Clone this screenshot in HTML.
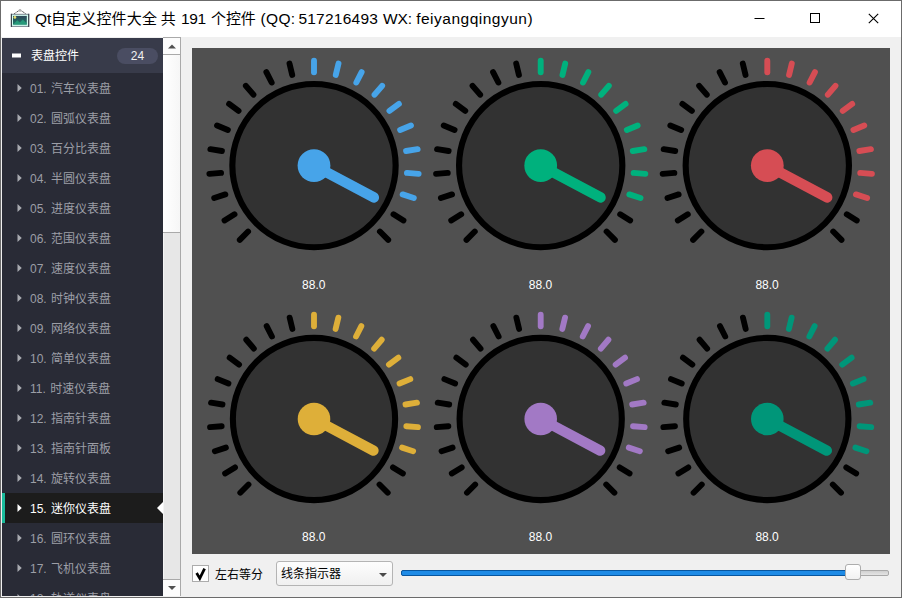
<!DOCTYPE html>
<html lang="zh"><head><meta charset="utf-8"><title>Qt自定义控件大全</title>
<style>
*{box-sizing:border-box;margin:0;padding:0}
html,body{width:902px;height:598px;overflow:hidden;background:#f0f0f0}
body{position:relative;font-family:"Liberation Sans","Noto Sans CJK SC",sans-serif;font-size:12px;color:#000}
#win{position:absolute;left:0;top:0;width:902px;height:598px;border:1px solid #6b6b6b;overflow:hidden}
.abs{position:absolute}
#title{left:0;top:0;width:900px;height:36px;background:#fff}
#ttext{left:0;top:8px;height:20px;line-height:20px;white-space:nowrap;color:#000}
#ttext span{position:absolute;top:0;line-height:20px}
#side{left:1px;top:37px;width:161px;height:558px;background:#292b36;overflow:hidden}
#hdr{left:0;top:0;width:161px;height:35px;background:#383b4a;color:#fff}
#hdr .minus{position:absolute;left:10px;top:16px;width:9px;height:4px;background:#fff;transform:translateY(-0.5px)}
#hdr .t{position:absolute;left:29px;top:1px;line-height:35px;font-size:12px}
#hdr .badge{position:absolute;left:115px;top:10px;width:41px;height:16px;border-radius:8px;background:#4a4d62;color:#f0f0f0;text-align:center;line-height:17px;font-size:12px}
.it{position:absolute;left:0;width:161px;height:30px;line-height:30px;color:#9c9ea6;font-size:12px;top:0}
.it span{position:absolute;left:28px;top:1px;white-space:nowrap;word-spacing:1px}
.it .tri{position:absolute;left:15px;top:11px;width:5px;height:8px;background:#a8aab0;clip-path:polygon(10% 0,95% 50%,10% 100%)}
.it.sel{background:#1c1c1c;color:#fff;border-left:3px solid #1abc9c}
.it.sel span{left:25px}
.it.sel .tri{left:12px;background:#fff}
.it.sel:after{content:"";position:absolute;right:0;top:9px;width:0;height:0;border-right:6px solid #fff;border-top:6px solid transparent;border-bottom:6px solid transparent}
#sb{left:162px;top:37px;width:18px;height:558px;background:#e7e7e7;border-right:1px solid #a9a9a9;border-left:1px solid #f4f4f4}
#sb .up{position:absolute;left:-1px;top:-1px;width:18px;height:18px;background:#fcfcfc;border:1px solid #a9a9a9;border-left:none}
#sb .handle{position:absolute;left:-1px;top:17px;width:18px;height:178px;background:linear-gradient(90deg,#fff,#f6f6f6);border:1px solid #a9a9a9;border-top:none;border-left:none}
#sb .down{position:absolute;left:-1px;top:541px;width:18px;height:17px;background:#fcfcfc;border:1px solid #a9a9a9;border-left:none;border-bottom:none}
#panel{left:191px;top:47px;width:698px;height:506px;background:#505050}
.val{font-family:"Liberation Sans",sans-serif;font-size:12px;fill:#fff}
#chk{left:191px;top:564px;width:17px;height:17px;background:#fff;border:1px solid #acacac}
#chkl{left:214px;top:565px;line-height:18px;font-size:12px}
#combo{left:275px;top:560px;width:117px;height:25px;border:1px solid #b4b4b4;border-radius:3px;background:linear-gradient(#fdfdfd,#f0f0f0)}
#combo span{position:absolute;left:4px;top:1px;line-height:23px;font-size:12px}
#combo i{position:absolute;left:102px;top:11px;width:0;height:0;border-top:4px solid #4a4a4a;border-left:4px solid transparent;border-right:4px solid transparent}
#groove{left:400px;top:569px;width:488px;height:6px;border:1px solid #a8a8a8;border-radius:2px;background:linear-gradient(#d0d0d0,#e4e4e4)}
#fill{left:400px;top:569px;width:452px;height:6px;border:1px solid #08569f;border-radius:2px;background:#1e8be6}
#knob{left:844px;top:563px;width:16px;height:16px;border:1px solid #adadad;border-radius:3px;background:linear-gradient(#fff,#f2f2f2)}
</style></head><body>
<div id="win">
<div id="title" class="abs">
<svg class="abs" style="left:9px;top:7px" width="22" height="22" viewBox="0 0 22 22">
<defs><linearGradient id="pg" x1="0" y1="0" x2="0" y2="1"><stop offset="0" stop-color="#2f4658"/><stop offset="0.5" stop-color="#245e60"/><stop offset="1" stop-color="#1f7a68"/></linearGradient></defs>
<path d="M3.9 6 L9.2 2.4 L10.8 2.4 L16.1 6" fill="none" stroke="#3a3a3a" stroke-width="0.9" stroke-dasharray="1.3 0.5"/>
<circle cx="10" cy="2.4" r="1.4" fill="#b4b4b4"/>
<rect x="1.4" y="6.3" width="17.3" height="12.1" fill="#d4fff2" stroke="#7c8892" stroke-width="1"/>
<path d="M1.4 5.8 V18.9 M18.7 5.8 V18.9" stroke="#38424a" stroke-width="1.1" fill="none"/>
<rect x="3" y="7.9" width="13.8" height="8.7" fill="url(#pg)"/>
<path d="M3.2 16.6 L7.2 12.2 L9.8 14.6 L12.8 11.6 L16.8 15.4 L16.8 16.6 Z" fill="#27a07c" opacity="0.9"/>
<circle cx="4.9" cy="9.4" r="1.4" fill="#e6de6e"/>
</svg>
<div id="ttext" class="abs"><span style="left:33.9px;font-size:15.5px;letter-spacing:-0.05px">Qt</span><span style="left:50.0px;font-size:15px;letter-spacing:0.15px">自定义控件大全</span> <span style="left:159.8px;font-size:15px;letter-spacing:0.0px">共</span> <span style="left:180.1px;font-size:15.5px;letter-spacing:-0.44px">191</span> <span style="left:210.1px;font-size:15px;letter-spacing:-0.16px">个控件</span> <span style="left:259.6px;font-size:15.5px;letter-spacing:0.3px">(QQ:</span> <span style="left:297.4px;font-size:15.5px;letter-spacing:0.24px">517216493</span> <span style="left:382.1px;font-size:15.5px;letter-spacing:-0.14px">WX:</span> <span style="left:415.2px;font-size:15.5px;letter-spacing:0.5px">feiyangqingyun)</span> </div>
<svg class="abs" style="left:740px;top:0" width="160" height="36" viewBox="0 0 160 36">
<path d="M13.5 17.5 H23.5" stroke="#000" stroke-width="1" fill="none"/>
<rect x="69.5" y="12.5" width="9" height="9" stroke="#000" stroke-width="1" fill="none"/>
<path d="M127.8 12.8 L137.2 22.2 M137.2 12.8 L127.8 22.2" stroke="#000" stroke-width="1.1" fill="none"/>
</svg>
</div>
<div id="side" class="abs">
<div id="hdr" class="abs"><i class="minus"></i><span class="t">表盘控件</span><span class="badge">24</span></div>
<div class="it" style="top:35px"><i class="tri"></i><span>01. 汽车仪表盘</span></div>
<div class="it" style="top:65px"><i class="tri"></i><span>02. 圆弧仪表盘</span></div>
<div class="it" style="top:95px"><i class="tri"></i><span>03. 百分比表盘</span></div>
<div class="it" style="top:125px"><i class="tri"></i><span>04. 半圆仪表盘</span></div>
<div class="it" style="top:155px"><i class="tri"></i><span>05. 进度仪表盘</span></div>
<div class="it" style="top:185px"><i class="tri"></i><span>06. 范围仪表盘</span></div>
<div class="it" style="top:215px"><i class="tri"></i><span>07. 速度仪表盘</span></div>
<div class="it" style="top:245px"><i class="tri"></i><span>08. 时钟仪表盘</span></div>
<div class="it" style="top:275px"><i class="tri"></i><span>09. 网络仪表盘</span></div>
<div class="it" style="top:305px"><i class="tri"></i><span>10. 简单仪表盘</span></div>
<div class="it" style="top:335px"><i class="tri"></i><span>11. 时速仪表盘</span></div>
<div class="it" style="top:365px"><i class="tri"></i><span>12. 指南针表盘</span></div>
<div class="it" style="top:395px"><i class="tri"></i><span>13. 指南针面板</span></div>
<div class="it" style="top:425px"><i class="tri"></i><span>14. 旋转仪表盘</span></div>
<div class="it sel" style="top:455px"><i class="tri"></i><span>15. 迷你仪表盘</span></div>
<div class="it" style="top:485px"><i class="tri"></i><span>16. 圆环仪表盘</span></div>
<div class="it" style="top:515px"><i class="tri"></i><span>17. 飞机仪表盘</span></div>
<div class="it" style="top:545px"><i class="tri"></i><span>18. 轨道仪表盘</span></div>
</div>
<div id="sb" class="abs"><div class="up"><svg width="16" height="15" viewBox="0 0 16 15" style="position:absolute;left:0;top:0"><path d="M5 10.5 L9 6.5 L13 10.5 Z" fill="#505050"/></svg></div><div class="handle"></div><div class="down"><svg width="16" height="16" viewBox="0 0 16 16" style="position:absolute;left:0;top:0"><path d="M5 6 L9 10 L13 6 Z" fill="#505050"/></svg></div></div>
<div id="panel" class="abs"></div>
<svg class="abs" style="left:-1px;top:-1px" width="902" height="598" viewBox="0 0 902 598">
<g transform="translate(314.0 165.6) scale(1.093)">
<line x1="0" y1="85.3" x2="0" y2="96" stroke="#000" stroke-width="5.4" stroke-linecap="round" transform="rotate(45.00)"/>
<line x1="0" y1="85.3" x2="0" y2="96" stroke="#000" stroke-width="5.4" stroke-linecap="round" transform="rotate(58.50)"/>
<line x1="0" y1="85.3" x2="0" y2="96" stroke="#000" stroke-width="5.4" stroke-linecap="round" transform="rotate(72.00)"/>
<line x1="0" y1="85.3" x2="0" y2="96" stroke="#000" stroke-width="5.4" stroke-linecap="round" transform="rotate(85.50)"/>
<line x1="0" y1="85.3" x2="0" y2="96" stroke="#000" stroke-width="5.4" stroke-linecap="round" transform="rotate(99.00)"/>
<line x1="0" y1="85.3" x2="0" y2="96" stroke="#000" stroke-width="5.4" stroke-linecap="round" transform="rotate(112.50)"/>
<line x1="0" y1="85.3" x2="0" y2="96" stroke="#000" stroke-width="5.4" stroke-linecap="round" transform="rotate(126.00)"/>
<line x1="0" y1="85.3" x2="0" y2="96" stroke="#000" stroke-width="5.4" stroke-linecap="round" transform="rotate(139.50)"/>
<line x1="0" y1="85.3" x2="0" y2="96" stroke="#000" stroke-width="5.4" stroke-linecap="round" transform="rotate(153.00)"/>
<line x1="0" y1="85.3" x2="0" y2="96" stroke="#000" stroke-width="5.4" stroke-linecap="round" transform="rotate(166.50)"/>
<line x1="0" y1="85.3" x2="0" y2="96" stroke="#47A4E9" stroke-width="5.4" stroke-linecap="round" transform="rotate(180.00)"/>
<line x1="0" y1="85.3" x2="0" y2="96" stroke="#47A4E9" stroke-width="5.4" stroke-linecap="round" transform="rotate(193.50)"/>
<line x1="0" y1="85.3" x2="0" y2="96" stroke="#47A4E9" stroke-width="5.4" stroke-linecap="round" transform="rotate(207.00)"/>
<line x1="0" y1="85.3" x2="0" y2="96" stroke="#47A4E9" stroke-width="5.4" stroke-linecap="round" transform="rotate(220.50)"/>
<line x1="0" y1="85.3" x2="0" y2="96" stroke="#47A4E9" stroke-width="5.4" stroke-linecap="round" transform="rotate(234.00)"/>
<line x1="0" y1="85.3" x2="0" y2="96" stroke="#47A4E9" stroke-width="5.4" stroke-linecap="round" transform="rotate(247.50)"/>
<line x1="0" y1="85.3" x2="0" y2="96" stroke="#47A4E9" stroke-width="5.4" stroke-linecap="round" transform="rotate(261.00)"/>
<line x1="0" y1="85.3" x2="0" y2="96" stroke="#47A4E9" stroke-width="5.4" stroke-linecap="round" transform="rotate(274.50)"/>
<line x1="0" y1="85.3" x2="0" y2="96" stroke="#47A4E9" stroke-width="5.4" stroke-linecap="round" transform="rotate(288.00)"/>
<line x1="0" y1="85.3" x2="0" y2="96" stroke="#000" stroke-width="5.4" stroke-linecap="round" transform="rotate(301.50)"/>
<line x1="0" y1="85.3" x2="0" y2="96" stroke="#000" stroke-width="5.4" stroke-linecap="round" transform="rotate(315.00)"/>
<circle r="74.7" fill="#323232" stroke="#000" stroke-width="5.6"/>
<line x1="0" y1="0" x2="0" y2="62" stroke="#47A4E9" stroke-width="9.6" stroke-linecap="round" transform="rotate(298.00)"/>
<circle r="15" fill="#47A4E9"/>
</g>
<text x="313.8" y="288.5" text-anchor="middle" class="val">88.0</text>
<g transform="translate(540.7 165.6) scale(1.093)">
<line x1="0" y1="85.3" x2="0" y2="96" stroke="#000" stroke-width="5.4" stroke-linecap="round" transform="rotate(45.00)"/>
<line x1="0" y1="85.3" x2="0" y2="96" stroke="#000" stroke-width="5.4" stroke-linecap="round" transform="rotate(58.50)"/>
<line x1="0" y1="85.3" x2="0" y2="96" stroke="#000" stroke-width="5.4" stroke-linecap="round" transform="rotate(72.00)"/>
<line x1="0" y1="85.3" x2="0" y2="96" stroke="#000" stroke-width="5.4" stroke-linecap="round" transform="rotate(85.50)"/>
<line x1="0" y1="85.3" x2="0" y2="96" stroke="#000" stroke-width="5.4" stroke-linecap="round" transform="rotate(99.00)"/>
<line x1="0" y1="85.3" x2="0" y2="96" stroke="#000" stroke-width="5.4" stroke-linecap="round" transform="rotate(112.50)"/>
<line x1="0" y1="85.3" x2="0" y2="96" stroke="#000" stroke-width="5.4" stroke-linecap="round" transform="rotate(126.00)"/>
<line x1="0" y1="85.3" x2="0" y2="96" stroke="#000" stroke-width="5.4" stroke-linecap="round" transform="rotate(139.50)"/>
<line x1="0" y1="85.3" x2="0" y2="96" stroke="#000" stroke-width="5.4" stroke-linecap="round" transform="rotate(153.00)"/>
<line x1="0" y1="85.3" x2="0" y2="96" stroke="#000" stroke-width="5.4" stroke-linecap="round" transform="rotate(166.50)"/>
<line x1="0" y1="85.3" x2="0" y2="96" stroke="#00B17D" stroke-width="5.4" stroke-linecap="round" transform="rotate(180.00)"/>
<line x1="0" y1="85.3" x2="0" y2="96" stroke="#00B17D" stroke-width="5.4" stroke-linecap="round" transform="rotate(193.50)"/>
<line x1="0" y1="85.3" x2="0" y2="96" stroke="#00B17D" stroke-width="5.4" stroke-linecap="round" transform="rotate(207.00)"/>
<line x1="0" y1="85.3" x2="0" y2="96" stroke="#00B17D" stroke-width="5.4" stroke-linecap="round" transform="rotate(220.50)"/>
<line x1="0" y1="85.3" x2="0" y2="96" stroke="#00B17D" stroke-width="5.4" stroke-linecap="round" transform="rotate(234.00)"/>
<line x1="0" y1="85.3" x2="0" y2="96" stroke="#00B17D" stroke-width="5.4" stroke-linecap="round" transform="rotate(247.50)"/>
<line x1="0" y1="85.3" x2="0" y2="96" stroke="#00B17D" stroke-width="5.4" stroke-linecap="round" transform="rotate(261.00)"/>
<line x1="0" y1="85.3" x2="0" y2="96" stroke="#00B17D" stroke-width="5.4" stroke-linecap="round" transform="rotate(274.50)"/>
<line x1="0" y1="85.3" x2="0" y2="96" stroke="#00B17D" stroke-width="5.4" stroke-linecap="round" transform="rotate(288.00)"/>
<line x1="0" y1="85.3" x2="0" y2="96" stroke="#000" stroke-width="5.4" stroke-linecap="round" transform="rotate(301.50)"/>
<line x1="0" y1="85.3" x2="0" y2="96" stroke="#000" stroke-width="5.4" stroke-linecap="round" transform="rotate(315.00)"/>
<circle r="74.7" fill="#323232" stroke="#000" stroke-width="5.6"/>
<line x1="0" y1="0" x2="0" y2="62" stroke="#00B17D" stroke-width="9.6" stroke-linecap="round" transform="rotate(298.00)"/>
<circle r="15" fill="#00B17D"/>
</g>
<text x="540.5" y="288.5" text-anchor="middle" class="val">88.0</text>
<g transform="translate(767.3 165.6) scale(1.093)">
<line x1="0" y1="85.3" x2="0" y2="96" stroke="#000" stroke-width="5.4" stroke-linecap="round" transform="rotate(45.00)"/>
<line x1="0" y1="85.3" x2="0" y2="96" stroke="#000" stroke-width="5.4" stroke-linecap="round" transform="rotate(58.50)"/>
<line x1="0" y1="85.3" x2="0" y2="96" stroke="#000" stroke-width="5.4" stroke-linecap="round" transform="rotate(72.00)"/>
<line x1="0" y1="85.3" x2="0" y2="96" stroke="#000" stroke-width="5.4" stroke-linecap="round" transform="rotate(85.50)"/>
<line x1="0" y1="85.3" x2="0" y2="96" stroke="#000" stroke-width="5.4" stroke-linecap="round" transform="rotate(99.00)"/>
<line x1="0" y1="85.3" x2="0" y2="96" stroke="#000" stroke-width="5.4" stroke-linecap="round" transform="rotate(112.50)"/>
<line x1="0" y1="85.3" x2="0" y2="96" stroke="#000" stroke-width="5.4" stroke-linecap="round" transform="rotate(126.00)"/>
<line x1="0" y1="85.3" x2="0" y2="96" stroke="#000" stroke-width="5.4" stroke-linecap="round" transform="rotate(139.50)"/>
<line x1="0" y1="85.3" x2="0" y2="96" stroke="#000" stroke-width="5.4" stroke-linecap="round" transform="rotate(153.00)"/>
<line x1="0" y1="85.3" x2="0" y2="96" stroke="#000" stroke-width="5.4" stroke-linecap="round" transform="rotate(166.50)"/>
<line x1="0" y1="85.3" x2="0" y2="96" stroke="#D64D54" stroke-width="5.4" stroke-linecap="round" transform="rotate(180.00)"/>
<line x1="0" y1="85.3" x2="0" y2="96" stroke="#D64D54" stroke-width="5.4" stroke-linecap="round" transform="rotate(193.50)"/>
<line x1="0" y1="85.3" x2="0" y2="96" stroke="#D64D54" stroke-width="5.4" stroke-linecap="round" transform="rotate(207.00)"/>
<line x1="0" y1="85.3" x2="0" y2="96" stroke="#D64D54" stroke-width="5.4" stroke-linecap="round" transform="rotate(220.50)"/>
<line x1="0" y1="85.3" x2="0" y2="96" stroke="#D64D54" stroke-width="5.4" stroke-linecap="round" transform="rotate(234.00)"/>
<line x1="0" y1="85.3" x2="0" y2="96" stroke="#D64D54" stroke-width="5.4" stroke-linecap="round" transform="rotate(247.50)"/>
<line x1="0" y1="85.3" x2="0" y2="96" stroke="#D64D54" stroke-width="5.4" stroke-linecap="round" transform="rotate(261.00)"/>
<line x1="0" y1="85.3" x2="0" y2="96" stroke="#D64D54" stroke-width="5.4" stroke-linecap="round" transform="rotate(274.50)"/>
<line x1="0" y1="85.3" x2="0" y2="96" stroke="#D64D54" stroke-width="5.4" stroke-linecap="round" transform="rotate(288.00)"/>
<line x1="0" y1="85.3" x2="0" y2="96" stroke="#000" stroke-width="5.4" stroke-linecap="round" transform="rotate(301.50)"/>
<line x1="0" y1="85.3" x2="0" y2="96" stroke="#000" stroke-width="5.4" stroke-linecap="round" transform="rotate(315.00)"/>
<circle r="74.7" fill="#323232" stroke="#000" stroke-width="5.6"/>
<line x1="0" y1="0" x2="0" y2="62" stroke="#D64D54" stroke-width="9.6" stroke-linecap="round" transform="rotate(298.00)"/>
<circle r="15" fill="#D64D54"/>
</g>
<text x="767.1" y="288.5" text-anchor="middle" class="val">88.0</text>
<g transform="translate(314.0 419.0) scale(1.086)">
<line x1="0" y1="85.3" x2="0" y2="96" stroke="#000" stroke-width="5.4" stroke-linecap="round" transform="rotate(45.00)"/>
<line x1="0" y1="85.3" x2="0" y2="96" stroke="#000" stroke-width="5.4" stroke-linecap="round" transform="rotate(58.50)"/>
<line x1="0" y1="85.3" x2="0" y2="96" stroke="#000" stroke-width="5.4" stroke-linecap="round" transform="rotate(72.00)"/>
<line x1="0" y1="85.3" x2="0" y2="96" stroke="#000" stroke-width="5.4" stroke-linecap="round" transform="rotate(85.50)"/>
<line x1="0" y1="85.3" x2="0" y2="96" stroke="#000" stroke-width="5.4" stroke-linecap="round" transform="rotate(99.00)"/>
<line x1="0" y1="85.3" x2="0" y2="96" stroke="#000" stroke-width="5.4" stroke-linecap="round" transform="rotate(112.50)"/>
<line x1="0" y1="85.3" x2="0" y2="96" stroke="#000" stroke-width="5.4" stroke-linecap="round" transform="rotate(126.00)"/>
<line x1="0" y1="85.3" x2="0" y2="96" stroke="#000" stroke-width="5.4" stroke-linecap="round" transform="rotate(139.50)"/>
<line x1="0" y1="85.3" x2="0" y2="96" stroke="#000" stroke-width="5.4" stroke-linecap="round" transform="rotate(153.00)"/>
<line x1="0" y1="85.3" x2="0" y2="96" stroke="#000" stroke-width="5.4" stroke-linecap="round" transform="rotate(166.50)"/>
<line x1="0" y1="85.3" x2="0" y2="96" stroke="#DEAF39" stroke-width="5.4" stroke-linecap="round" transform="rotate(180.00)"/>
<line x1="0" y1="85.3" x2="0" y2="96" stroke="#DEAF39" stroke-width="5.4" stroke-linecap="round" transform="rotate(193.50)"/>
<line x1="0" y1="85.3" x2="0" y2="96" stroke="#DEAF39" stroke-width="5.4" stroke-linecap="round" transform="rotate(207.00)"/>
<line x1="0" y1="85.3" x2="0" y2="96" stroke="#DEAF39" stroke-width="5.4" stroke-linecap="round" transform="rotate(220.50)"/>
<line x1="0" y1="85.3" x2="0" y2="96" stroke="#DEAF39" stroke-width="5.4" stroke-linecap="round" transform="rotate(234.00)"/>
<line x1="0" y1="85.3" x2="0" y2="96" stroke="#DEAF39" stroke-width="5.4" stroke-linecap="round" transform="rotate(247.50)"/>
<line x1="0" y1="85.3" x2="0" y2="96" stroke="#DEAF39" stroke-width="5.4" stroke-linecap="round" transform="rotate(261.00)"/>
<line x1="0" y1="85.3" x2="0" y2="96" stroke="#DEAF39" stroke-width="5.4" stroke-linecap="round" transform="rotate(274.50)"/>
<line x1="0" y1="85.3" x2="0" y2="96" stroke="#DEAF39" stroke-width="5.4" stroke-linecap="round" transform="rotate(288.00)"/>
<line x1="0" y1="85.3" x2="0" y2="96" stroke="#000" stroke-width="5.4" stroke-linecap="round" transform="rotate(301.50)"/>
<line x1="0" y1="85.3" x2="0" y2="96" stroke="#000" stroke-width="5.4" stroke-linecap="round" transform="rotate(315.00)"/>
<circle r="74.7" fill="#323232" stroke="#000" stroke-width="5.6"/>
<line x1="0" y1="0" x2="0" y2="62" stroke="#DEAF39" stroke-width="9.6" stroke-linecap="round" transform="rotate(298.00)"/>
<circle r="15" fill="#DEAF39"/>
</g>
<text x="313.8" y="540.5" text-anchor="middle" class="val">88.0</text>
<g transform="translate(540.7 419.0) scale(1.086)">
<line x1="0" y1="85.3" x2="0" y2="96" stroke="#000" stroke-width="5.4" stroke-linecap="round" transform="rotate(45.00)"/>
<line x1="0" y1="85.3" x2="0" y2="96" stroke="#000" stroke-width="5.4" stroke-linecap="round" transform="rotate(58.50)"/>
<line x1="0" y1="85.3" x2="0" y2="96" stroke="#000" stroke-width="5.4" stroke-linecap="round" transform="rotate(72.00)"/>
<line x1="0" y1="85.3" x2="0" y2="96" stroke="#000" stroke-width="5.4" stroke-linecap="round" transform="rotate(85.50)"/>
<line x1="0" y1="85.3" x2="0" y2="96" stroke="#000" stroke-width="5.4" stroke-linecap="round" transform="rotate(99.00)"/>
<line x1="0" y1="85.3" x2="0" y2="96" stroke="#000" stroke-width="5.4" stroke-linecap="round" transform="rotate(112.50)"/>
<line x1="0" y1="85.3" x2="0" y2="96" stroke="#000" stroke-width="5.4" stroke-linecap="round" transform="rotate(126.00)"/>
<line x1="0" y1="85.3" x2="0" y2="96" stroke="#000" stroke-width="5.4" stroke-linecap="round" transform="rotate(139.50)"/>
<line x1="0" y1="85.3" x2="0" y2="96" stroke="#000" stroke-width="5.4" stroke-linecap="round" transform="rotate(153.00)"/>
<line x1="0" y1="85.3" x2="0" y2="96" stroke="#000" stroke-width="5.4" stroke-linecap="round" transform="rotate(166.50)"/>
<line x1="0" y1="85.3" x2="0" y2="96" stroke="#A279C5" stroke-width="5.4" stroke-linecap="round" transform="rotate(180.00)"/>
<line x1="0" y1="85.3" x2="0" y2="96" stroke="#A279C5" stroke-width="5.4" stroke-linecap="round" transform="rotate(193.50)"/>
<line x1="0" y1="85.3" x2="0" y2="96" stroke="#A279C5" stroke-width="5.4" stroke-linecap="round" transform="rotate(207.00)"/>
<line x1="0" y1="85.3" x2="0" y2="96" stroke="#A279C5" stroke-width="5.4" stroke-linecap="round" transform="rotate(220.50)"/>
<line x1="0" y1="85.3" x2="0" y2="96" stroke="#A279C5" stroke-width="5.4" stroke-linecap="round" transform="rotate(234.00)"/>
<line x1="0" y1="85.3" x2="0" y2="96" stroke="#A279C5" stroke-width="5.4" stroke-linecap="round" transform="rotate(247.50)"/>
<line x1="0" y1="85.3" x2="0" y2="96" stroke="#A279C5" stroke-width="5.4" stroke-linecap="round" transform="rotate(261.00)"/>
<line x1="0" y1="85.3" x2="0" y2="96" stroke="#A279C5" stroke-width="5.4" stroke-linecap="round" transform="rotate(274.50)"/>
<line x1="0" y1="85.3" x2="0" y2="96" stroke="#A279C5" stroke-width="5.4" stroke-linecap="round" transform="rotate(288.00)"/>
<line x1="0" y1="85.3" x2="0" y2="96" stroke="#000" stroke-width="5.4" stroke-linecap="round" transform="rotate(301.50)"/>
<line x1="0" y1="85.3" x2="0" y2="96" stroke="#000" stroke-width="5.4" stroke-linecap="round" transform="rotate(315.00)"/>
<circle r="74.7" fill="#323232" stroke="#000" stroke-width="5.6"/>
<line x1="0" y1="0" x2="0" y2="62" stroke="#A279C5" stroke-width="9.6" stroke-linecap="round" transform="rotate(298.00)"/>
<circle r="15" fill="#A279C5"/>
</g>
<text x="540.5" y="540.5" text-anchor="middle" class="val">88.0</text>
<g transform="translate(767.3 419.0) scale(1.086)">
<line x1="0" y1="85.3" x2="0" y2="96" stroke="#000" stroke-width="5.4" stroke-linecap="round" transform="rotate(45.00)"/>
<line x1="0" y1="85.3" x2="0" y2="96" stroke="#000" stroke-width="5.4" stroke-linecap="round" transform="rotate(58.50)"/>
<line x1="0" y1="85.3" x2="0" y2="96" stroke="#000" stroke-width="5.4" stroke-linecap="round" transform="rotate(72.00)"/>
<line x1="0" y1="85.3" x2="0" y2="96" stroke="#000" stroke-width="5.4" stroke-linecap="round" transform="rotate(85.50)"/>
<line x1="0" y1="85.3" x2="0" y2="96" stroke="#000" stroke-width="5.4" stroke-linecap="round" transform="rotate(99.00)"/>
<line x1="0" y1="85.3" x2="0" y2="96" stroke="#000" stroke-width="5.4" stroke-linecap="round" transform="rotate(112.50)"/>
<line x1="0" y1="85.3" x2="0" y2="96" stroke="#000" stroke-width="5.4" stroke-linecap="round" transform="rotate(126.00)"/>
<line x1="0" y1="85.3" x2="0" y2="96" stroke="#000" stroke-width="5.4" stroke-linecap="round" transform="rotate(139.50)"/>
<line x1="0" y1="85.3" x2="0" y2="96" stroke="#000" stroke-width="5.4" stroke-linecap="round" transform="rotate(153.00)"/>
<line x1="0" y1="85.3" x2="0" y2="96" stroke="#000" stroke-width="5.4" stroke-linecap="round" transform="rotate(166.50)"/>
<line x1="0" y1="85.3" x2="0" y2="96" stroke="#009679" stroke-width="5.4" stroke-linecap="round" transform="rotate(180.00)"/>
<line x1="0" y1="85.3" x2="0" y2="96" stroke="#009679" stroke-width="5.4" stroke-linecap="round" transform="rotate(193.50)"/>
<line x1="0" y1="85.3" x2="0" y2="96" stroke="#009679" stroke-width="5.4" stroke-linecap="round" transform="rotate(207.00)"/>
<line x1="0" y1="85.3" x2="0" y2="96" stroke="#009679" stroke-width="5.4" stroke-linecap="round" transform="rotate(220.50)"/>
<line x1="0" y1="85.3" x2="0" y2="96" stroke="#009679" stroke-width="5.4" stroke-linecap="round" transform="rotate(234.00)"/>
<line x1="0" y1="85.3" x2="0" y2="96" stroke="#009679" stroke-width="5.4" stroke-linecap="round" transform="rotate(247.50)"/>
<line x1="0" y1="85.3" x2="0" y2="96" stroke="#009679" stroke-width="5.4" stroke-linecap="round" transform="rotate(261.00)"/>
<line x1="0" y1="85.3" x2="0" y2="96" stroke="#009679" stroke-width="5.4" stroke-linecap="round" transform="rotate(274.50)"/>
<line x1="0" y1="85.3" x2="0" y2="96" stroke="#009679" stroke-width="5.4" stroke-linecap="round" transform="rotate(288.00)"/>
<line x1="0" y1="85.3" x2="0" y2="96" stroke="#000" stroke-width="5.4" stroke-linecap="round" transform="rotate(301.50)"/>
<line x1="0" y1="85.3" x2="0" y2="96" stroke="#000" stroke-width="5.4" stroke-linecap="round" transform="rotate(315.00)"/>
<circle r="74.7" fill="#323232" stroke="#000" stroke-width="5.6"/>
<line x1="0" y1="0" x2="0" y2="62" stroke="#009679" stroke-width="9.6" stroke-linecap="round" transform="rotate(298.00)"/>
<circle r="15" fill="#009679"/>
</g>
<text x="767.1" y="540.5" text-anchor="middle" class="val">88.0</text>
</svg>
<div id="chk" class="abs"><svg width="15" height="15" viewBox="0 0 15 15" style="position:absolute;left:0;top:0"><path d="M3.6 7 L6.8 12.4 L11.6 2.6" fill="none" stroke="#000" stroke-width="2.7"/></svg></div>
<div id="chkl" class="abs">左右等分</div>
<div id="combo" class="abs"><span>线条指示器</span><i></i></div>
<div id="groove" class="abs"></div>
<div id="fill" class="abs"></div>
<div id="knob" class="abs"></div>
</div>
</body></html>
